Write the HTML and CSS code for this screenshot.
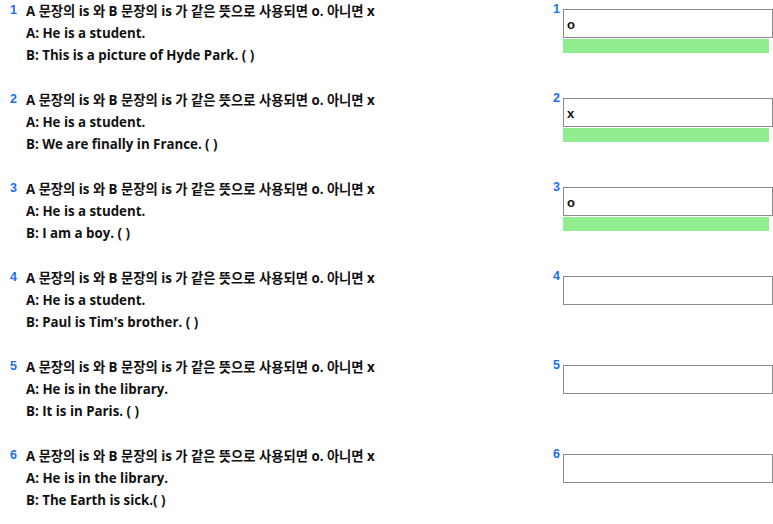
FILE: index.html
```html
<!DOCTYPE html>
<html lang="ko">
<head>
<meta charset="utf-8">
<link rel="stylesheet" href="styles.css">
</head>
<body>
<div class="list">
  <div class="item">
    <div class="q">
      <span class="num">1</span>
      <div class="lines">
        <div>A 문장의 is 와 B 문장의 is 가 같은 뜻으로 사용되면 o. 아니면 x</div>
        <div>A: He is a student.</div>
        <div>B: This is a picture of Hyde Park. ( )</div>
      </div>
    </div>
    <div class="ans">
      <span class="anum">1</span>
      <div class="field">
        <div class="box">o</div>
        <div class="ok"></div>
      </div>
    </div>
  </div>
  <div class="item">
    <div class="q">
      <span class="num">2</span>
      <div class="lines">
        <div>A 문장의 is 와 B 문장의 is 가 같은 뜻으로 사용되면 o. 아니면 x</div>
        <div>A: He is a student.</div>
        <div>B: We are finally in France. ( )</div>
      </div>
    </div>
    <div class="ans">
      <span class="anum">2</span>
      <div class="field">
        <div class="box">x</div>
        <div class="ok"></div>
      </div>
    </div>
  </div>
  <div class="item">
    <div class="q">
      <span class="num">3</span>
      <div class="lines">
        <div>A 문장의 is 와 B 문장의 is 가 같은 뜻으로 사용되면 o. 아니면 x</div>
        <div>A: He is a student.</div>
        <div>B: I am a boy. ( )</div>
      </div>
    </div>
    <div class="ans">
      <span class="anum">3</span>
      <div class="field">
        <div class="box">o</div>
        <div class="ok"></div>
      </div>
    </div>
  </div>
  <div class="item">
    <div class="q">
      <span class="num">4</span>
      <div class="lines">
        <div>A 문장의 is 와 B 문장의 is 가 같은 뜻으로 사용되면 o. 아니면 x</div>
        <div>A: He is a student.</div>
        <div>B: Paul is Tim's brother. ( )</div>
      </div>
    </div>
    <div class="ans">
      <span class="anum">4</span>
      <div class="field">
        <div class="box"></div>
      </div>
    </div>
  </div>
  <div class="item">
    <div class="q">
      <span class="num">5</span>
      <div class="lines">
        <div>A 문장의 is 와 B 문장의 is 가 같은 뜻으로 사용되면 o. 아니면 x</div>
        <div>A: He is in the library.</div>
        <div>B: It is in Paris. ( )</div>
      </div>
    </div>
    <div class="ans">
      <span class="anum">5</span>
      <div class="field">
        <div class="box"></div>
      </div>
    </div>
  </div>
  <div class="item">
    <div class="q">
      <span class="num">6</span>
      <div class="lines">
        <div>A 문장의 is 와 B 문장의 is 가 같은 뜻으로 사용되면 o. 아니면 x</div>
        <div>A: He is in the library.</div>
        <div>B: The Earth is sick.( )</div>
      </div>
    </div>
    <div class="ans">
      <span class="anum">6</span>
      <div class="field">
        <div class="box"></div>
      </div>
    </div>
  </div>
</div>
</body>
</html>
```
FILE: styles.css
```css
html, body {
  margin: 0;
  padding: 0;
  background: #fff;
}
body {
  font-family: "Open Sans", "Noto Sans CJK KR", sans-serif;
  color: #111;
}
.list {
  display: flex;
  flex-direction: column;
}
.item {
  display: flex;
  justify-content: space-between;
  height: 89px;
}
.q {
  display: flex;
  padding-left: 10px;
}
.num {
  width: 16px;
  font-family: "Liberation Sans", sans-serif;
  font-weight: bold;
  font-size: 12.5px;
  color: #1a6ef5;
  line-height: 20px;
}
.lines {
  font-size: 13.3px;
  font-weight: bold;
  line-height: 22px;
  margin-top: 0;
}
.ans {
  display: flex;
  width: 220px;
  padding-top: 1px;
}
.anum {
  width: 10px;
  font-family: "Liberation Sans", sans-serif;
  font-weight: bold;
  font-size: 12.5px;
  color: #1a6ef5;
  line-height: 16px;
}
.field {
  display: flex;
  flex-direction: column;
  padding-top: 8px;
  width: 210px;
}
.box {
  height: 27px;
  border: 1px solid #8a8a8a;
  font-family: "Liberation Sans", sans-serif;
  font-weight: bold;
  font-size: 13px;
  line-height: 29px;
  padding-left: 3px;
}
.ok {
  height: 14px;
  width: 206px;
  margin-top: 1px;
  background: #90ee90;
}
```
